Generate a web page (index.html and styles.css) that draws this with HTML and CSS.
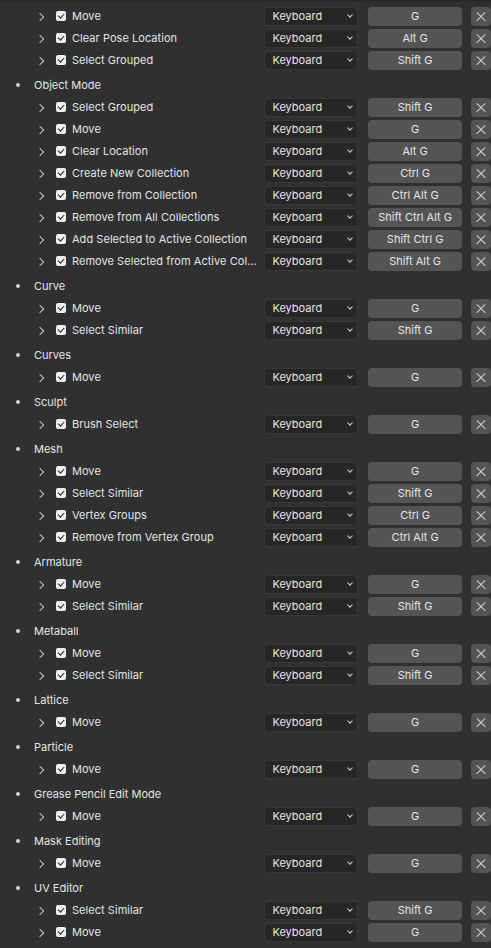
FILE: index.html
```html
<!DOCTYPE html>
<html>
<head>
<meta charset="utf-8">
<link rel="stylesheet" href="styles.css">
</head>
<body>
<div class="panel">
  <div class="group">
    <div class="row"><span class="chev"></span><span class="cb"></span><span class="label">Move</span><span class="dd">Keyboard</span><span class="key">G</span><span class="x"></span></div>
    <div class="row"><span class="chev"></span><span class="cb"></span><span class="label">Clear Pose Location</span><span class="dd">Keyboard</span><span class="key">Alt G</span><span class="x"></span></div>
    <div class="row"><span class="chev"></span><span class="cb"></span><span class="label">Select Grouped</span><span class="dd">Keyboard</span><span class="key">Shift G</span><span class="x"></span></div>
  </div>
  <div class="group">
    <div class="head"><span class="bullet"></span>Object Mode</div>
    <div class="row"><span class="chev"></span><span class="cb"></span><span class="label">Select Grouped</span><span class="dd">Keyboard</span><span class="key">Shift G</span><span class="x"></span></div>
    <div class="row"><span class="chev"></span><span class="cb"></span><span class="label">Move</span><span class="dd">Keyboard</span><span class="key">G</span><span class="x"></span></div>
    <div class="row"><span class="chev"></span><span class="cb"></span><span class="label">Clear Location</span><span class="dd">Keyboard</span><span class="key">Alt G</span><span class="x"></span></div>
    <div class="row"><span class="chev"></span><span class="cb"></span><span class="label">Create New Collection</span><span class="dd">Keyboard</span><span class="key">Ctrl G</span><span class="x"></span></div>
    <div class="row"><span class="chev"></span><span class="cb"></span><span class="label">Remove from Collection</span><span class="dd">Keyboard</span><span class="key">Ctrl Alt G</span><span class="x"></span></div>
    <div class="row"><span class="chev"></span><span class="cb"></span><span class="label">Remove from All Collections</span><span class="dd">Keyboard</span><span class="key">Shift Ctrl Alt G</span><span class="x"></span></div>
    <div class="row"><span class="chev"></span><span class="cb"></span><span class="label">Add Selected to Active Collection</span><span class="dd">Keyboard</span><span class="key">Shift Ctrl G</span><span class="x"></span></div>
    <div class="row"><span class="chev"></span><span class="cb"></span><span class="label">Remove Selected from Active Col…</span><span class="dd">Keyboard</span><span class="key">Shift Alt G</span><span class="x"></span></div>
  </div>
  <div class="group">
    <div class="head"><span class="bullet"></span>Curve</div>
    <div class="row"><span class="chev"></span><span class="cb"></span><span class="label">Move</span><span class="dd">Keyboard</span><span class="key">G</span><span class="x"></span></div>
    <div class="row"><span class="chev"></span><span class="cb"></span><span class="label">Select Similar</span><span class="dd">Keyboard</span><span class="key">Shift G</span><span class="x"></span></div>
  </div>
  <div class="group">
    <div class="head"><span class="bullet"></span>Curves</div>
    <div class="row"><span class="chev"></span><span class="cb"></span><span class="label">Move</span><span class="dd">Keyboard</span><span class="key">G</span><span class="x"></span></div>
  </div>
  <div class="group">
    <div class="head"><span class="bullet"></span>Sculpt</div>
    <div class="row"><span class="chev"></span><span class="cb"></span><span class="label">Brush Select</span><span class="dd">Keyboard</span><span class="key">G</span><span class="x"></span></div>
  </div>
  <div class="group">
    <div class="head"><span class="bullet"></span>Mesh</div>
    <div class="row"><span class="chev"></span><span class="cb"></span><span class="label">Move</span><span class="dd">Keyboard</span><span class="key">G</span><span class="x"></span></div>
    <div class="row"><span class="chev"></span><span class="cb"></span><span class="label">Select Similar</span><span class="dd">Keyboard</span><span class="key">Shift G</span><span class="x"></span></div>
    <div class="row"><span class="chev"></span><span class="cb"></span><span class="label">Vertex Groups</span><span class="dd">Keyboard</span><span class="key">Ctrl G</span><span class="x"></span></div>
    <div class="row"><span class="chev"></span><span class="cb"></span><span class="label">Remove from Vertex Group</span><span class="dd">Keyboard</span><span class="key">Ctrl Alt G</span><span class="x"></span></div>
  </div>
  <div class="group">
    <div class="head"><span class="bullet"></span>Armature</div>
    <div class="row"><span class="chev"></span><span class="cb"></span><span class="label">Move</span><span class="dd">Keyboard</span><span class="key">G</span><span class="x"></span></div>
    <div class="row"><span class="chev"></span><span class="cb"></span><span class="label">Select Similar</span><span class="dd">Keyboard</span><span class="key">Shift G</span><span class="x"></span></div>
  </div>
  <div class="group">
    <div class="head"><span class="bullet"></span>Metaball</div>
    <div class="row"><span class="chev"></span><span class="cb"></span><span class="label">Move</span><span class="dd">Keyboard</span><span class="key">G</span><span class="x"></span></div>
    <div class="row"><span class="chev"></span><span class="cb"></span><span class="label">Select Similar</span><span class="dd">Keyboard</span><span class="key">Shift G</span><span class="x"></span></div>
  </div>
  <div class="group">
    <div class="head"><span class="bullet"></span>Lattice</div>
    <div class="row"><span class="chev"></span><span class="cb"></span><span class="label">Move</span><span class="dd">Keyboard</span><span class="key">G</span><span class="x"></span></div>
  </div>
  <div class="group">
    <div class="head"><span class="bullet"></span>Particle</div>
    <div class="row"><span class="chev"></span><span class="cb"></span><span class="label">Move</span><span class="dd">Keyboard</span><span class="key">G</span><span class="x"></span></div>
  </div>
  <div class="group">
    <div class="head"><span class="bullet"></span>Grease Pencil Edit Mode</div>
    <div class="row"><span class="chev"></span><span class="cb"></span><span class="label">Move</span><span class="dd">Keyboard</span><span class="key">G</span><span class="x"></span></div>
  </div>
  <div class="group">
    <div class="head"><span class="bullet"></span>Mask Editing</div>
    <div class="row"><span class="chev"></span><span class="cb"></span><span class="label">Move</span><span class="dd">Keyboard</span><span class="key">G</span><span class="x"></span></div>
  </div>
  <div class="group">
    <div class="head"><span class="bullet"></span>UV Editor</div>
    <div class="row"><span class="chev"></span><span class="cb"></span><span class="label">Select Similar</span><span class="dd">Keyboard</span><span class="key">Shift G</span><span class="x"></span></div>
    <div class="row"><span class="chev"></span><span class="cb"></span><span class="label">Move</span><span class="dd">Keyboard</span><span class="key">G</span><span class="x"></span></div>
  </div>
</div>
</body>
</html>
```
FILE: styles.css
```css
html, body {
  margin: 0;
  background: #303030;
}
body {
  font-family: Inter, "Noto Sans", sans-serif;
  font-size: 11px;
  color: #e4e4e4;
  width: 491px;
  height: 948px;
  overflow: hidden;
}
.panel {
  border-top: 2px solid #282828;
  padding-top: 3px;
}
.group + .group {
  margin-top: 3px;
}
.row, .head {
  height: 22px;
  display: flex;
  align-items: center;
  white-space: nowrap;
}
.bullet {
  width: 4px;
  height: 4px;
  border-radius: 50%;
  background: #d4d4d4;
  margin-left: 16px;
  margin-right: 14px;
}
.chev {
  position: relative;
  width: 8px;
  height: 9px;
  margin-left: 37px;
}
.chev::before {
  content: "";
  position: absolute;
  left: 0px;
  top: 2px;
  width: 5px;
  height: 5px;
  border-top: 1.3px solid #c4c4c4;
  border-right: 1.3px solid #c4c4c4;
  transform: rotate(45deg);
}
.cb {
  position: relative;
  width: 10px;
  height: 10px;
  border-radius: 2px;
  background: #f0f0f0;
  margin-left: 11px;
}
.cb::after {
  content: "";
  position: absolute;
  left: 3.3px;
  top: 1px;
  width: 2.6px;
  height: 5.4px;
  border-right: 1.8px solid #1e1e1e;
  border-bottom: 1.8px solid #1e1e1e;
  transform: rotate(42deg);
}
.label {
  width: 193px;
  margin-left: 6px;
  overflow: hidden;
  letter-spacing: 0.05px;
}
.dd {
  position: relative;
  box-sizing: border-box;
  width: 94px;
  height: 19px;
  line-height: 17px;
  padding-left: 7px;
  background: #262626;
  border: 1px solid #383838;
  border-radius: 4px;
}
.dd::after {
  content: "";
  position: absolute;
  right: 5px;
  top: 5px;
  width: 3px;
  height: 3px;
  border-right: 1.3px solid #cfcfcf;
  border-bottom: 1.3px solid #cfcfcf;
  transform: rotate(45deg);
}
.key {
  box-sizing: border-box;
  width: 94px;
  height: 19px;
  line-height: 19px;
  margin-left: 10px;
  text-align: center;
  background: #545454;
  border-radius: 4px;
  color: #e6e6e6;
}
.x {
  position: relative;
  flex: none;
  width: 20px;
  height: 19px;
  margin-left: 9px;
  background: #545454;
  border-radius: 4px;
}
.x::before, .x::after {
  content: "";
  position: absolute;
  left: 4px;
  top: 9px;
  width: 12px;
  height: 1.3px;
  background: #d4d4d4;
  transform: rotate(45deg);
}
.x::after {
  transform: rotate(-45deg);
}
```
